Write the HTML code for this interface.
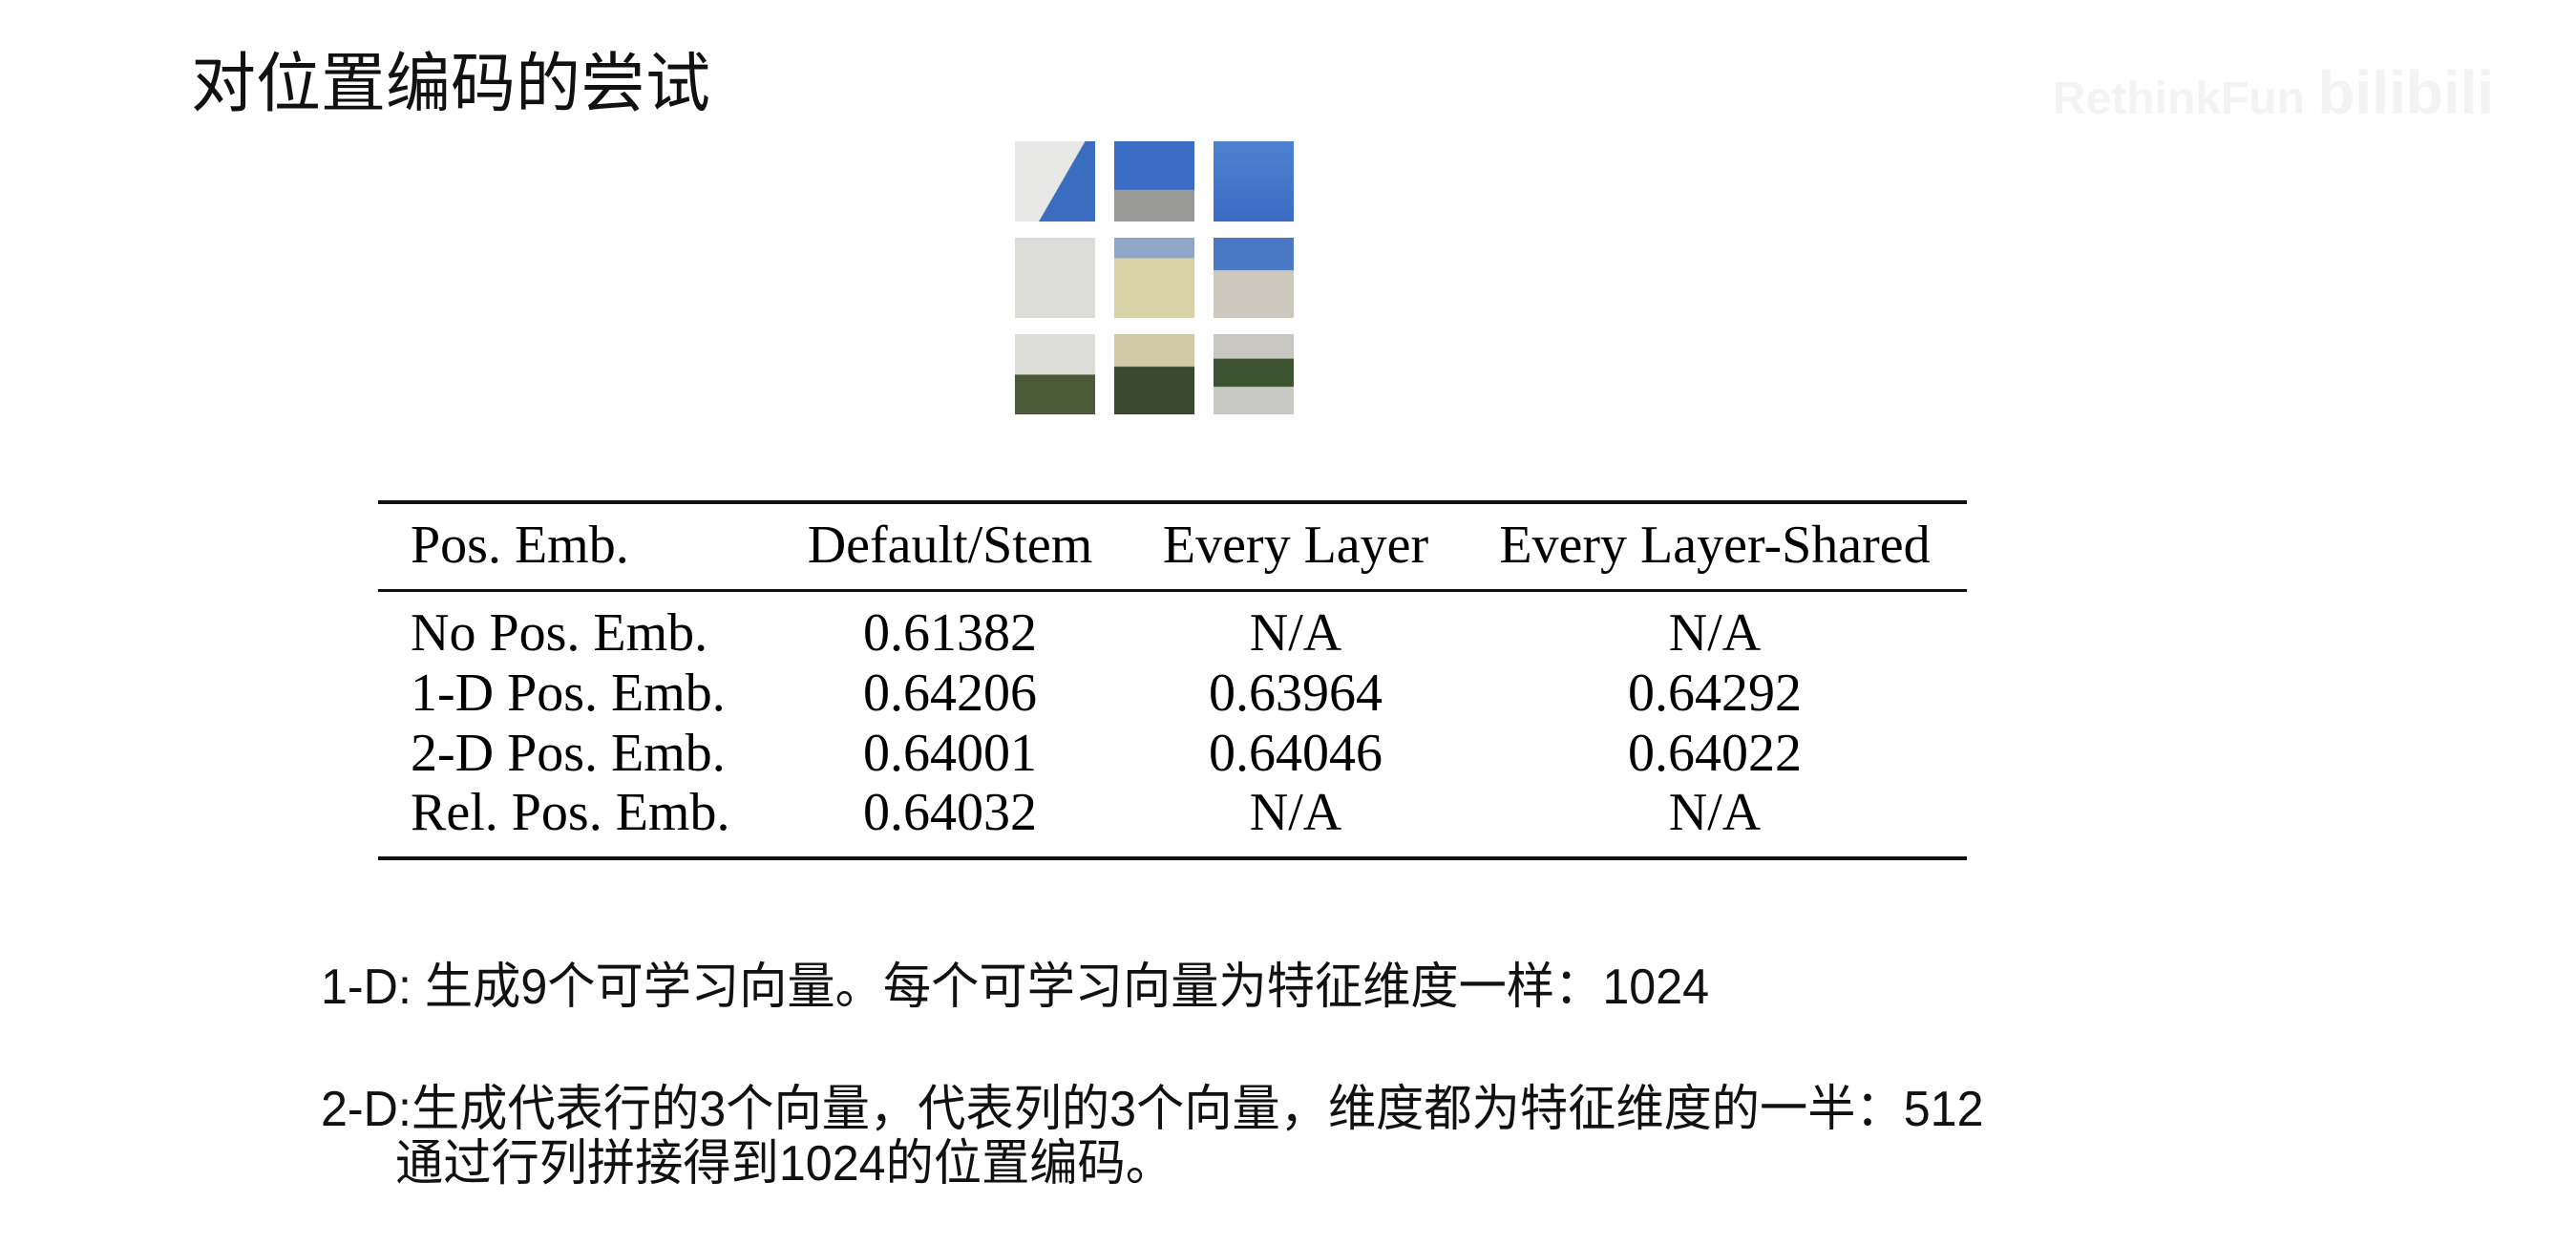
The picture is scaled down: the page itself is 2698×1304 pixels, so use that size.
<!DOCTYPE html>
<html><head><meta charset="utf-8"><style>
html,body{margin:0;padding:0;background:#fff;}
body{width:2698px;height:1304px;position:relative;overflow:hidden;}
.cjk{font-family:"Liberation Sans","Noto Sans CJK SC",sans-serif;color:#111;position:absolute;white-space:nowrap;}
.sq{transform:scaleX(0.966);transform-origin:0 0;}
.t{position:absolute;font-family:"Liberation Serif",serif;font-size:56px;color:#000;white-space:nowrap;line-height:56px;}
.c{transform:translateX(-50%);}
.rule{position:absolute;left:396px;width:1664px;background:#111;}
.tile{position:absolute;width:84px;height:84px;}
</style></head><body>
<div class="cjk" style="left:200px;top:54px;font-size:68px;line-height:68px;">对位置编码的尝试</div>
<div style="position:absolute;left:2150px;top:60px;font-family:'Liberation Sans',sans-serif;font-size:48px;color:#f3f3f3;font-weight:bold;">RethinkFun <span style="font-size:64px">bilibili</span></div>

<div class="tile" style="left:1063px;top:148px;background:linear-gradient(120deg,#e8e8e6 0 55%,#3a6cc0 56% 100%);"></div>
<div class="tile" style="left:1167px;top:148px;background:linear-gradient(180deg,#3a6cc4 0 60%,#9a9a98 61% 100%);"></div>
<div class="tile" style="left:1271px;top:148px;background:linear-gradient(180deg,#4c82d0,#3a6cc4);"></div>
<div class="tile" style="left:1063px;top:249px;background:#dcdcd8;"></div>
<div class="tile" style="left:1167px;top:249px;background:linear-gradient(180deg,#8ea6c8 0 25%,#d8d2a8 26% 100%);"></div>
<div class="tile" style="left:1271px;top:249px;background:linear-gradient(180deg,#4a78c4 0 40%,#ccc8be 41% 100%);"></div>
<div class="tile" style="left:1063px;top:350px;background:linear-gradient(180deg,#dcdcd8 0 50%,#4a5a38 51% 100%);"></div>
<div class="tile" style="left:1167px;top:350px;background:linear-gradient(180deg,#d0caa6 0 40%,#3a4a2c 41% 100%);"></div>
<div class="tile" style="left:1271px;top:350px;background:linear-gradient(180deg,#c8c6c0 0 30%,#3c5230 31% 65%,#c8c8c4 66% 100%);"></div>

<div class="rule" style="top:524px;height:4px;"></div>
<div class="rule" style="top:617px;height:3px;"></div>
<div class="rule" style="top:897px;height:4px;"></div>

<div class="t" style="left:430px;top:543px;">Pos. Emb.</div>
<div class="t c" style="left:995px;top:543px;">Default/Stem</div>
<div class="t c" style="left:1357px;top:543px;">Every Layer</div>
<div class="t c" style="left:1796px;top:543px;">Every Layer-Shared</div>

<div class="t" style="left:430px;top:635px;">No Pos. Emb.</div>
<div class="t c" style="left:995px;top:635px;">0.61382</div>
<div class="t c" style="left:1357px;top:635px;">N/A</div>
<div class="t c" style="left:1796px;top:635px;">N/A</div>

<div class="t" style="left:430px;top:698px;">1-D Pos. Emb.</div>
<div class="t c" style="left:995px;top:698px;">0.64206</div>
<div class="t c" style="left:1357px;top:698px;">0.63964</div>
<div class="t c" style="left:1796px;top:698px;">0.64292</div>

<div class="t" style="left:430px;top:761px;">2-D Pos. Emb.</div>
<div class="t c" style="left:995px;top:761px;">0.64001</div>
<div class="t c" style="left:1357px;top:761px;">0.64046</div>
<div class="t c" style="left:1796px;top:761px;">0.64022</div>

<div class="t" style="left:430px;top:823px;">Rel. Pos. Emb.</div>
<div class="t c" style="left:995px;top:823px;">0.64032</div>
<div class="t c" style="left:1357px;top:823px;">N/A</div>
<div class="t c" style="left:1796px;top:823px;">N/A</div>

<div class="cjk sq" style="left:336px;top:1008px;font-size:52px;line-height:52px;">1-D: 生成9个可学习向量。每个可学习向量为特征维度一样：1024</div>
<div class="cjk sq" style="left:336px;top:1136px;font-size:52px;line-height:52px;">2-D:生成代表行的3个向量，代表列的3个向量，维度都为特征维度的一半：512</div>
<div class="cjk sq" style="left:414px;top:1193px;font-size:52px;line-height:52px;">通过行列拼接得到1024的位置编码。</div>
</body></html>
